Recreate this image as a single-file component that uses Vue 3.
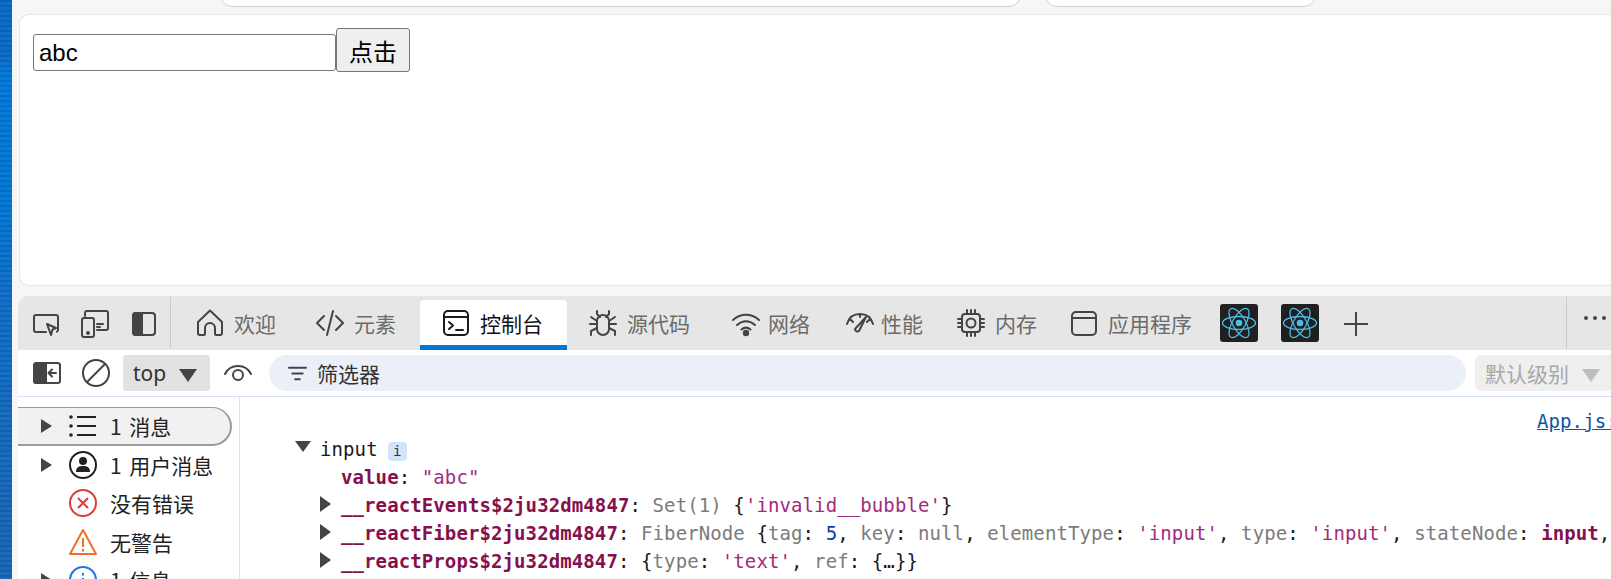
<script setup>
const tabs = [
  { key: 'home', label: '欢迎' },
  { key: 'code', label: '元素' },
  { key: 'console', label: '控制台', active: true },
  { key: 'bug', label: '源代码' },
  { key: 'wifi', label: '网络' },
  { key: 'gauge', label: '性能' },
  { key: 'chip', label: '内存' },
  { key: 'app', label: '应用程序' },
]
</script>

<template>
  <div class="screen">
    <div class="wallpaper"></div>
    <div class="browser">
      <div class="topbar">
        <div class="pill pill-a"></div>
        <div class="pill pill-b"></div>
      </div>
      <div class="page">
        <input class="field" type="text" value="abc" />
        <button class="btn">点击</button>
      </div>
      <div class="devtools">
        <div class="tabbar">
          <div class="tools">
            <svg class="ic" viewBox="0 0 28 28"><path d="M14 22H4a2 2 0 0 1-2-2V7a2 2 0 0 1 2-2h20a2 2 0 0 1 2 2v13a2 2 0 0 1-1 1.7" /><path d="M15 14l9 4-3.500 1.500L19 25z" /></svg>
            <svg class="ic" viewBox="0 0 28 28"><path d="M4 6V3a2 2 0 0 1 2-2h19a2 2 0 0 1 2 2v15a2 2 0 0 1-2 2h-9" /><rect x="1" y="8" width="12" height="19" rx="2" /><path d="M16 14h6M16 17h3" /><circle cx="7" cy="23" r="1" class="fill" /></svg>
            <svg class="ic" viewBox="0 0 28 28"><rect x="3" y="3" width="22" height="22" rx="3" /><path class="fill" d="M6 3h6v22H6a3 3 0 0 1-3-3V6a3 3 0 0 1 3-3z" /></svg>
          </div>
          <div v-for="t in tabs" :key="t.key" class="tab" :class="{ active: t.active }">
            <svg class="ic" :class="{ dark: t.active }" viewBox="0 0 28 28">
              <template v-if="t.key === 'home'">
                <path d="M2 13L14 1.500 26 13v11a2 2 0 0 1-2 2h-4a1 1 0 0 1-1-1v-6a5 5 0 0 0-10 0v6a1 1 0 0 1-1 1H4a2 2 0 0 1-2-2z" />
              </template>
              <template v-else-if="t.key === 'code'">
                <path d="M8 7l-7 7 7 7M20 7l7 7-7 7M17 2L11 26" />
              </template>
              <template v-else-if="t.key === 'console'">
                <rect x="2" y="2" width="24" height="24" rx="4" /><path d="M2 8h24M7 13l4 3.500-4 3.500M14 21h7" />
              </template>
              <template v-else-if="t.key === 'bug'">
                <rect x="8" y="6" width="12" height="20" rx="6" /><path d="M8 2v3l3 3M20 2v3l-3 3M1 15h7M20 15h7M2 8l6 4M26 8l-6 4M2 26v-4l6-3M26 26v-4l-6-3" />
              </template>
              <template v-else-if="t.key === 'wifi'">
                <path d="M1 11c8-7 18-7 26 0M5 16c6-5 12-5 18 0M9.500 20.500c3-2.500 6-2.500 9 0" /><circle cx="14" cy="24" r="2.200" class="fill" />
              </template>
              <template v-else-if="t.key === 'gauge'">
                <path d="M1 15C3 8 8 5 14 5s11 3 13 10M4 10l3 3M24 10l-3 3M14 5v3" /><path d="M20 8l-7 14a2.500 2.500 0 0 1-4-2z" />
              </template>
              <template v-else-if="t.key === 'chip'">
                <rect x="5" y="5" width="18" height="18" rx="3" /><circle cx="14" cy="14" r="4.500" /><path d="M10 1v4M14 1v4M18 1v4M10 23v4M14 23v4M18 23v4M1 10h4M1 14h4M1 18h4M23 10h4M23 14h4M23 18h4" />
              </template>
              <template v-else>
                <rect x="2" y="3" width="24" height="23" rx="4" /><path d="M2 9h24" />
              </template>
            </svg>
            <span>{{ t.label }}</span>
          </div>
          <div class="react-wrap">
            <svg v-for="n in 2" :key="n" class="react" viewBox="0 0 38 38">
              <rect width="38" height="38" rx="3" fill="#202020" />
              <g fill="none" stroke="#4bbce6" stroke-width="1.300">
                <ellipse cx="19" cy="19" rx="16.500" ry="6.500" />
                <ellipse cx="19" cy="19" rx="16.500" ry="6.500" transform="rotate(60 19 19)" />
                <ellipse cx="19" cy="19" rx="16.500" ry="6.500" transform="rotate(120 19 19)" />
              </g>
              <circle cx="19" cy="19" r="3.300" fill="#4bbce6" />
            </svg>
          </div>
          <svg class="plus" viewBox="0 0 26 26"><path d="M13 1v24M1 13h24" /></svg>
          <div class="more">
            <svg class="dots" viewBox="0 0 24 6"><circle cx="3" cy="3" r="2" /><circle cx="12" cy="3" r="2" /><circle cx="21" cy="3" r="2" /></svg>
          </div>
        </div>
        <div class="toolbar">
          <svg class="ic tb1" viewBox="0 0 28 28"><rect x="1" y="4" width="26" height="20" rx="2.500" /><path class="fill" d="M3.500 4H13v20H3.500A2.500 2.500 0 0 1 1 21.500v-15A2.500 2.500 0 0 1 3.500 4z" /><path d="M23 14h-7M19 10.500L15.500 14l3.500 3.500" /></svg>
          <svg class="ic tb2" viewBox="0 0 28 28"><circle cx="14" cy="14" r="13" /><path d="M5 23L23 5" /></svg>
          <div class="ctx"><span>top</span><i class="tri"></i></div>
          <svg class="ic eye" viewBox="0 0 28 28"><path d="M1 15c3-6 8-8 13-8s10 2 13 8" /><circle cx="14" cy="16" r="5" /></svg>
          <div class="filter">
            <svg class="ic ficon" viewBox="0 0 20 20"><path d="M1 4h18M4.500 10h11M7.500 16h5" /></svg>
            <span>筛选器</span>
          </div>
          <div class="level"><span>默认级别</span><i class="tri light"></i></div>
        </div>
        <div class="body">
          <aside class="side">
            <div class="sitem selected">
              <i class="arr"></i>
              <svg class="sic" viewBox="0 0 28 28"><g fill="none" stroke="#222" stroke-width="2"><path d="M8 5h19M8 14h19M8 23h19" /></g><circle cx="2" cy="5" r="1.800" fill="#222" /><circle cx="2" cy="14" r="1.800" fill="#222" /><circle cx="2" cy="23" r="1.800" fill="#222" /></svg>
              <span>1 消息</span>
            </div>
            <div class="sitem">
              <i class="arr"></i>
              <svg class="sic" viewBox="0 0 28 28"><circle cx="14" cy="14" r="13" fill="none" stroke="#222" stroke-width="2" /><circle cx="14" cy="10" r="4" fill="#222" /><path d="M7 21c0-5 3-6 7-6s7 1 7 6z" fill="#222" /></svg>
              <span>1 用户消息</span>
            </div>
            <div class="sitem">
              <i class="noarr"></i>
              <svg class="sic" viewBox="0 0 28 28"><circle cx="14" cy="14" r="13" fill="none" stroke="#e03c3c" stroke-width="2" /><path d="M9 9l10 10M19 9L9 19" stroke="#e03c3c" stroke-width="2" /></svg>
              <span>没有错误</span>
            </div>
            <div class="sitem">
              <i class="noarr"></i>
              <svg class="sic" viewBox="0 0 28 28"><path d="M14 2L1 26h26z" fill="none" stroke="#f0702a" stroke-width="2" stroke-linejoin="round" /><path d="M14 10v9M14 21v2.500" stroke="#f0702a" stroke-width="2" /></svg>
              <span>无警告</span>
            </div>
            <div class="sitem">
              <i class="arr"></i>
              <svg class="sic" viewBox="0 0 28 28"><circle cx="14" cy="14" r="13" fill="none" stroke="#2277e0" stroke-width="2" /><path d="M14 12v9M14 7v2.500" stroke="#2277e0" stroke-width="2" /></svg>
              <span>1 信息</span>
            </div>
          </aside>
          <main class="log">
            <div class="row srcrow"><a class="src">App.js:4</a></div>
            <div class="row r-input"><i class="arr down"></i><span>input</span><b class="badge">i</b></div>
            <div class="row r-val"><b class="k">value</b><span>: </span><span class="s">"abc"</span></div>
            <div class="row r-prop"><i class="arr small"></i><b class="k">__reactEvents$2ju32dm4847</b><span>: </span><span class="g">Set(1) </span><span>{</span><span class="s">'invalid__bubble'</span><span>}</span></div>
            <div class="row r-prop"><i class="arr small"></i><b class="k">__reactFiber$2ju32dm4847</b><span>: </span><span class="g">FiberNode </span><span>{</span><span class="g">tag</span><span>: </span><span class="n">5</span><span>, </span><span class="g">key</span><span>: </span><span class="g">null</span><span>, </span><span class="g">elementType</span><span>: </span><span class="s">'input'</span><span>, </span><span class="g">type</span><span>: </span><span class="s">'input'</span><span>, </span><span class="g">stateNode</span><span>: </span><b class="k2">input</b><span>, </span></div>
            <div class="row r-prop"><i class="arr small"></i><b class="k">__reactProps$2ju32dm4847</b><span>: </span><span>{</span><span class="g">type</span><span>: </span><span class="s">'text'</span><span>, </span><span class="g">ref</span><span>: </span><span>{…}}</span></div>
          </main>
        </div>
      </div>
    </div>
  </div>
</template>

<style scoped>
.screen {
  width: 1611px;
  height: 579px;
  display: flex;
  overflow: hidden;
  background: #f6f6f6;
  font-family: "Noto Sans CJK SC", "Liberation Sans", sans-serif;
}
.wallpaper {
  width: 12px;
  flex: none;
  background:
    repeating-linear-gradient(180deg, rgba(0, 30, 90, 0.1) 0, rgba(0, 30, 90, 0.1) 2px, rgba(120, 190, 255, 0.06) 2px, rgba(120, 190, 255, 0.06) 5px),
    linear-gradient(180deg, #0a68c4 0, #0a68c4 55px, #0078d6 75px, #0076d2 200px, #0f6cc4 300px, #1864b0 579px);
}
.browser {
  flex: 1;
  min-width: 0;
  display: flex;
  flex-direction: column;
  padding-left: 7px;
}
.topbar {
  height: 14px;
  flex: none;
  display: flex;
  overflow: hidden;
  padding-left: 201px;
  gap: 24px;
}
.pill {
  height: 24px;
  margin-top: -17px;
  border: 1px solid #cfcfcf;
  border-bottom-width: 1.500px;
  border-radius: 16px;
  background: #fff;
  box-sizing: border-box;
}
.pill-a { width: 801px; }
.pill-b { width: 271px; }
.page {
  height: 272px;
  flex: none;
  box-sizing: border-box;
  display: flex;
  align-items: flex-start;
  padding: 13px 13px;
  background: #fff;
  border: 1px solid #e6e6e6;
  border-right: 0;
  border-radius: 10px 0 0 10px;
}
.field {
  width: 303px;
  height: 37px;
  margin-top: 6px;
  box-sizing: border-box;
  padding: 1px 5px;
  font: 24px "Liberation Sans", sans-serif;
  color: #000;
  border: 1px solid #767676;
  border-radius: 3px;
  outline: none;
}
.btn {
  width: 74px;
  height: 44px;
  padding: 0;
  box-sizing: border-box;
  font: 24px "Noto Sans CJK SC", sans-serif;
  color: #000;
  background: #efefef;
  border: 1px solid #767676;
  border-radius: 3px;
}
.devtools {
  margin-top: 10px;
  margin-left: -1px;
  flex: 1;
  min-height: 0;
  display: flex;
  flex-direction: column;
  background: #fff;
  border-radius: 10px 0 0 0;
  overflow: hidden;
}
.tabbar {
  height: 54px;
  flex: none;
  display: flex;
  align-items: stretch;
  background: #e6e6e6;
}
.ic {
  width: 28px;
  height: 28px;
  flex: none;
  fill: none;
  stroke: #444;
  stroke-width: 2;
  stroke-linecap: round;
  stroke-linejoin: round;
}
.ic .fill { fill: #444; stroke: #444; }
.ic.dark { stroke: #1a1a1a; }
.tools {
  width: 153px;
  box-sizing: border-box;
  margin: 1px 0;
  padding: 1px 0 0 14px;
  display: flex;
  align-items: center;
  gap: 21px;
  border-right: 1px solid #c9c9c9;
}
.tab {
  display: flex;
  align-items: center;
  gap: 10px;
  padding: 0 19px 0;
  font-size: 21px;
  color: #6b6b6b;
  white-space: nowrap;
}
.tab:nth-child(2) { margin-left: 6px; }
.tab:nth-child(3) { margin-left: 2px; }
.tab.active {
  margin: 4px 3px 0 5px;
  padding: 0 24px 0 22px;
  background: #fff;
  color: #111;
  border-radius: 4px 4px 0 0;
  border-bottom: 5px solid #0078d4;
  box-sizing: border-box;
}
.tab:nth-child(6) { margin-left: 4px; gap: 8px; }
.tab:nth-child(7) { margin-left: -2px; gap: 7px; }
.tab:nth-child(8) { margin-left: -4px; }
.tab:nth-child(9) { margin-left: -5px; }
.react-wrap {
  display: flex;
  align-items: center;
  gap: 23px;
  padding: 0 0 0 7px;
  margin-left: 2px;
}
.react { width: 38px; height: 38px; flex: none; }
.plus {
  width: 26px;
  height: 26px;
  flex: none;
  align-self: center;
  margin: 1px 0 0 24px;
  fill: none;
  stroke: #444;
  stroke-width: 2;
}
.more {
  margin-left: 197px;
  flex: 1;
  margin-top: 1px;
  margin-bottom: 1px;
  padding-bottom: 10px;
  box-sizing: border-box;
  border-left: 1px solid #c9c9c9;
  display: flex;
  align-items: center;
  padding-left: 16px;
}
.dots { width: 24px; height: 6px; flex: none; fill: #444; }
.toolbar {
  height: 47px;
  flex: none;
  box-sizing: border-box;
  display: flex;
  align-items: center;
  padding-left: 15px;
  border-bottom: 1px solid #d5e2f7;
  color: #333;
  font-size: 21px;
}
.tb2 { margin-left: 21px; }
.ctx {
  margin-left: 13px;
  width: 87px;
  height: 36px;
  box-sizing: border-box;
  padding-left: 10px;
  display: flex;
  align-items: center;
  gap: 13px;
  border-radius: 3px;
  background: #e2e2e2;
  font: 21px "Noto Sans", "Liberation Sans", sans-serif;
}
.tri {
  display: block;
  width: 0;
  height: 0;
  margin-top: 4px;
  border-left: 9px solid transparent;
  border-right: 9px solid transparent;
  border-top: 13px solid #444;
}
.tri.light { border-top-color: #bdbdbd; }
.eye { margin-left: 14px; }
.filter {
  margin-left: 17px;
  width: 1197px;
  height: 36px;
  box-sizing: border-box;
  flex: none;
  padding-left: 19px;
  display: flex;
  align-items: center;
  gap: 10px;
  border-radius: 18px;
  background: #ebeff8;
}
.ficon { width: 19px; height: 19px; }
.level {
  margin-left: 9px;
  flex: 1;
  height: 36px;
  box-sizing: border-box;
  padding-left: 10px;
  display: flex;
  align-items: center;
  gap: 13px;
  border-radius: 6px 0 0 6px;
  background: #efefef;
  color: #a8a8a8;
  white-space: nowrap;
}
.body {
  flex: 1;
  min-height: 0;
  display: flex;
}
.side {
  width: 222px;
  flex: none;
  box-sizing: border-box;
  padding: 10px 0 0;
  border-right: 1px solid #d5e2f7;
  font-size: 21px;
  color: #222;
}
.sitem {
  width: 214px;
  height: 38.500px;
  box-sizing: border-box;
  display: flex;
  align-items: center;
  padding-left: 23px;
  white-space: nowrap;
  word-spacing: 3px;
}
.selected {
  background: #f1f1f1;
  border: 1px solid #9a9a9a;
  border-width: 1px 2px 2px 0;
  border-radius: 0 20px 20px 0;
}
.sic { width: 28px; height: 28px; flex: none; margin-left: 17px; margin-right: 13px; }
.arr {
  display: block;
  width: 0;
  height: 0;
  flex: none;
  border-top: 7px solid transparent;
  border-bottom: 7px solid transparent;
  border-left: 11px solid #444;
}
.arr.down {
  border-left: 8px solid transparent;
  border-right: 8px solid transparent;
  border-bottom: 0;
  border-top: 11px solid #444;
  position: absolute;
  left: -25px;
  top: 6px;
}
.arr.small {
  position: absolute;
  left: -21px;
  top: 5px;
  border-top-width: 8px;
  border-bottom-width: 8px;
}
.noarr { display: block; width: 11px; flex: none; }
.log {
  flex: 1;
  min-width: 0;
  padding-top: 10px;
  font: 19px/28px "DejaVu Sans Mono", "Liberation Mono", monospace;
  letter-spacing: 0.100px;
  color: #1a1a1a;
}
.row {
  height: 28px;
  white-space: pre;
  position: relative;
}
.srcrow { padding-left: 1297px; }
.src { color: #0b57a6; text-decoration: underline; }
.r-input { margin-left: 80px; }
.r-val { margin-left: 101px; }
.r-prop { margin-left: 101px; }
.k { color: #87104c; font-weight: 700; }
.k2 { color: #87104c; font-weight: 700; }
.s { color: #a32a7c; }
.g { color: #7b7b7b; }
.n { color: #0b3fa6; }
.badge {
  display: inline-block;
  margin-left: 10px;
  width: 19px;
  height: 19px;
  border-radius: 4px;
  background: #d3e3fb;
  font-weight: 400;
  font-size: 14px;
  line-height: 19px;
  text-align: center;
  color: #333;
  letter-spacing: 0;
}
</style>

<style>
html, body { margin: 0; padding: 0; background: #f6f6f6; overflow: hidden; }
</style>
